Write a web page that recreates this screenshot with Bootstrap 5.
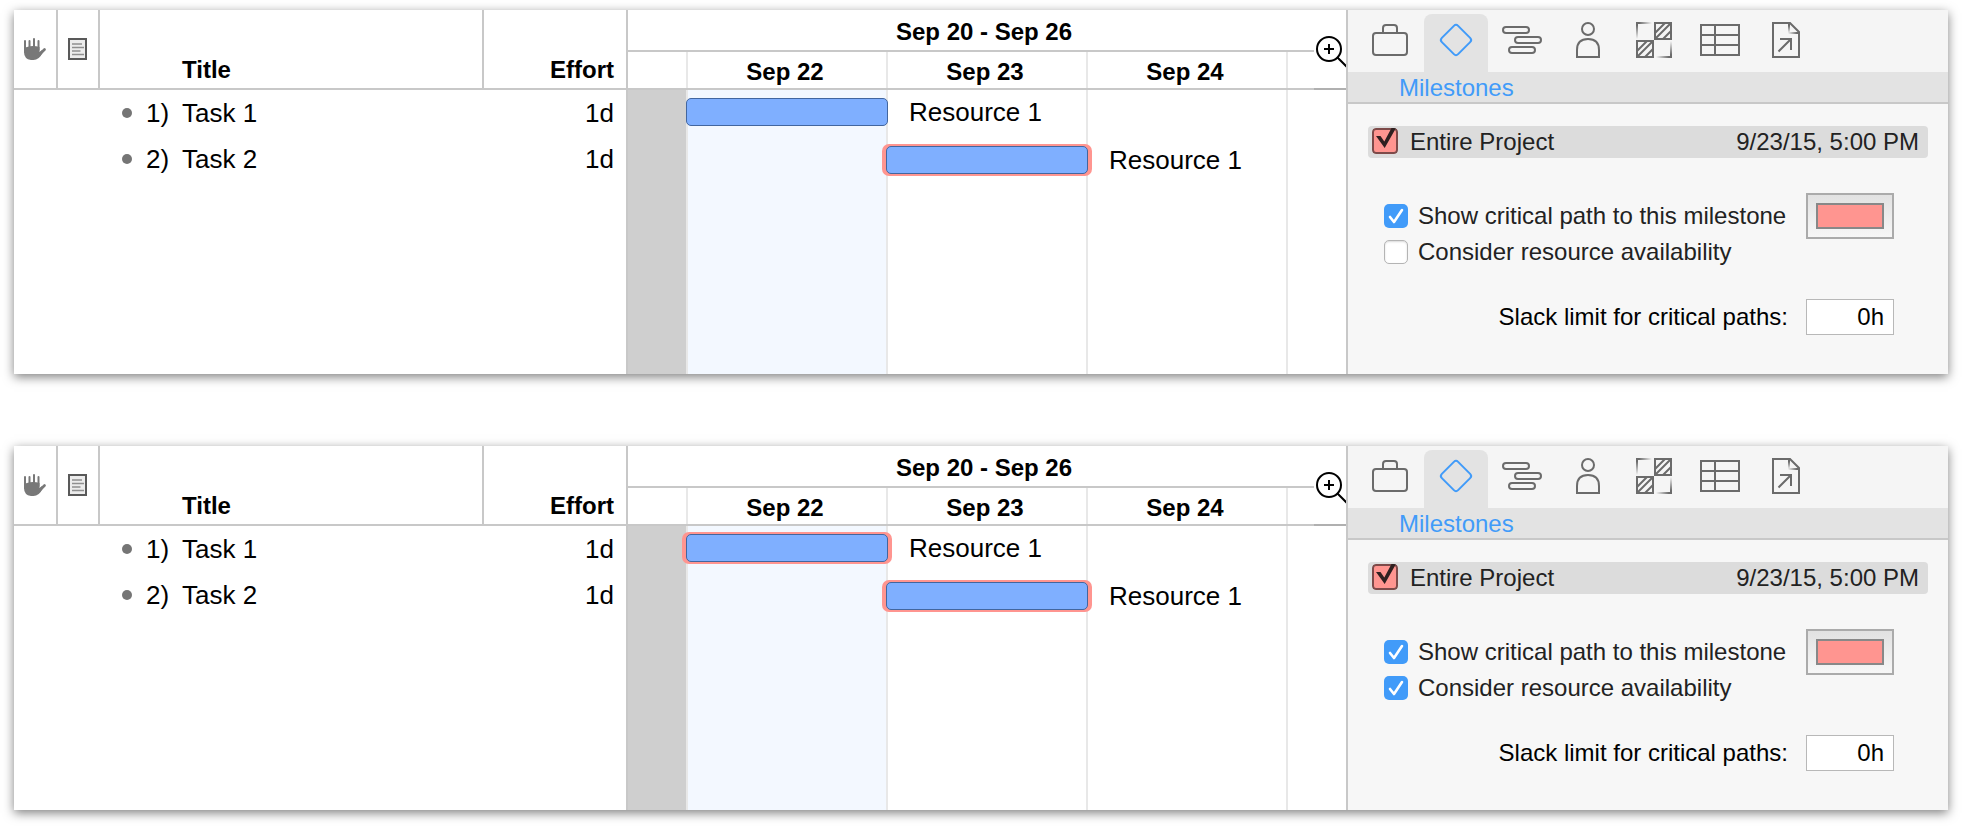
<!DOCTYPE html>
<html lang="en">
<head>
<meta charset="utf-8">
<meta name="viewport" content="width=device-width, initial-scale=1">
<title>Critical path milestones</title>
<link href="https://cdn.jsdelivr.net/npm/bootstrap@5.3.0/dist/css/bootstrap.min.css" rel="stylesheet">
<style>
  :root { --line: #c8c8c8; --faint: #e8e8e8; --ink: #6b6b6b; --accent: #419bf9; --critical: #ff9590; }
  body { font-family: "Liberation Sans", Arial, sans-serif; font-size: 24px; line-height: 24px; color: #000; background: #fff; padding: 10px 14px 16px; }
  .stack { gap: 72px; }
  .window { min-height: 364px; background: #fff; box-shadow: 0 3px 10px rgba(0,0,0,.5); }

  /* outline */
  .outline { width: 614px; border-right: 2px solid var(--line); }
  .outline table { table-layout: fixed; border-collapse: separate; border-spacing: 0; }
  .outline th { height: 80px; padding: 0 12px 6px; vertical-align: bottom; border-right: 2px solid var(--line); border-bottom: 2px solid var(--line); }
  .outline th:last-child { border-right: 0; }
  .outline th.icon-head { padding: 0; vertical-align: middle; text-align: center; }
  .outline th.title-head { padding-left: 82px; }
  .outline td { height: 46px; padding: 0 12px 0 0; font-size: 26px; line-height: 26px; vertical-align: middle; }
  .task { padding-left: 22px; }
  .dot { width: 10px; height: 10px; margin-right: 14px; border-radius: 50%; background: #757575; }
  .num { width: 36px; }

  /* timeline */
  .timeline { min-width: 0; }
  .range-head { height: 42px; padding: 4px 6px 0 0; border-bottom: 2px solid var(--line); }
  .days { display: grid; grid-template-columns: 58fr 200fr 200fr 200fr 60fr; }
  .day-head { height: 38px; border-bottom: 2px solid var(--line); }
  .days > .day { border-left: 2px solid var(--faint); }
  .day-head > .day { padding: 4px 4px 0 0; }
  .weekend { background: #cfcfcf; }
  .today { background: #f3f8ff; }
  .chart { display: grid; }
  .chart > * { grid-area: 1 / 1; }
  .bars { padding-top: 8px; gap: 20px; }
  .bar { height: 28px; margin-right: -2px; border: 1px solid #42669f; border-radius: 5px; background: #7fafff; }
  .bar.critical { box-shadow: -2px 0 0 2px var(--critical), 2px 0 0 2px var(--critical); }
  .who { grid-column-end: -1; padding-left: 23px; font-size: 26px; line-height: 28px; white-space: nowrap; }
  .first .bar { grid-column: 2; } .first .who { grid-column-start: 3; }
  .second .bar { grid-column: 3; } .second .who { grid-column-start: 4; }
  .zoom { width: 32px; height: 80px; background: #fff; border: 0; border-bottom: 2px solid #b0b0b0; padding: 6px 0 0; }

  /* inspector */
  .inspector { width: 602px; border-left: 2px solid var(--line); background: #f7f7f7; color: #222; }
  .tabs { gap: 2px; padding: 4px 10px 0; background: #f5f5f5; }
  .tabs button { width: 64px; height: 58px; padding: 0 0 6px; border: 0; border-radius: 8px 8px 0 0; background: none; color: var(--ink); }
  .tabs button.active { background: #e3e3e3; color: var(--accent); }
  .section-name { height: 32px; padding: 0 51px; line-height: 32px; font-size: 24px; font-weight: 400; color: var(--accent); background: #e3e3e3; border-bottom: 2px solid var(--line); }
  .milestone { height: 32px; margin: 22px 20px 35px; padding: 0 9px 0 4px; border-radius: 4px; background: #dcdcdc; }
  .milestone label { margin-left: 12px; }
  input[type=checkbox] { appearance: none; flex: none; width: 24px; height: 24px; margin: 0; background: #fff center / 100% 100% no-repeat; border: 1px solid #b4b4b4; border-radius: 5px; }
  input[type=checkbox]:not(:checked) { box-shadow: inset 0 1px 2px rgba(0,0,0,.15); }
  input[type=checkbox]:checked { border: 0; background-color: var(--accent); background-image: url("data:image/svg+xml,%3Csvg xmlns='http://www.w3.org/2000/svg' viewBox='0 0 24 24'%3E%3Cpath d='M6 13l4 5 8-12' fill='none' stroke='%23fff' stroke-width='2.6' stroke-linecap='round' stroke-linejoin='round'/%3E%3C/svg%3E"); }
  .milestone input[type=checkbox]:checked { width: 26px; height: 26px; margin-bottom: 2px; border-radius: 4px; background-color: transparent; background-image: url("data:image/svg+xml,%3Csvg xmlns='http://www.w3.org/2000/svg' viewBox='0 0 26 26'%3E%3Crect x='1' y='1' width='24' height='24' rx='3' fill='%23ff9590' stroke='%237d4a49' stroke-width='2'/%3E%3Cpath d='M4 8H8.500L12.300 13.500L19.500 0H24L12.700 20Z' fill='%23302020'/%3E%3C/svg%3E"); }
  .settings { padding: 0 54px 0 36px; }
  .options { gap: 12px; padding-top: 11px; }
  .options > div { gap: 10px; }
  .swatch { width: 88px; height: 46px; padding: 8px; border: 2px solid #ababab; background: linear-gradient(#e2e2e2, #f7f7f7); }
  .swatch span { display: block; height: 26px; border: 2px solid #888; background: var(--critical); }
  .slack { margin-top: 35px; gap: 18px; color: #000; }
  .slack input { width: 88px; height: 36px; padding: 0 9px; border: 1px solid #b8b8b8; border-radius: 0; text-align: right; font: inherit; color: #000; background: #fff; }
  svg { display: block; margin: auto; fill: none; stroke: currentColor; stroke-width: 2; }
</style>
</head>
<body>

<svg width="0" height="0" class="position-absolute" aria-hidden="true">
  <defs>
    <linearGradient id="fadeR"><stop offset=".2" stop-color="#6b6b6b"/><stop offset="1" stop-color="#6b6b6b" stop-opacity="0"/></linearGradient>
    <linearGradient id="fadeL"><stop offset="0" stop-color="#6b6b6b" stop-opacity="0"/><stop offset=".8" stop-color="#6b6b6b"/></linearGradient>
    <linearGradient id="fadeD" x2="0" y2="1"><stop offset=".2" stop-color="#6b6b6b"/><stop offset="1" stop-color="#6b6b6b" stop-opacity="0"/></linearGradient>
    <linearGradient id="fadeU" x2="0" y2="1"><stop offset="0" stop-color="#6b6b6b" stop-opacity="0"/><stop offset=".8" stop-color="#6b6b6b"/></linearGradient>
  </defs>
  <symbol id="hand" viewBox="0 0 22 22"><g stroke="#787878" stroke-linecap="round"><path d="M1 3V14M5.500 3V12M10 1V12M14.500 3V12"/><path stroke-width="2.600" d="M20.500 11.500L15 17"/></g><path fill="#787878" stroke="none" d="M0 10L3 9Q9 7 15.500 9V14L18 12L18.500 15Q15 22 9.500 22H7Q0 21 0 14Z"/></symbol>
  <symbol id="note" viewBox="0 0 20 22"><path fill="#ececec" stroke="#595959" d="M1 1H18V21H1Z"/><path stroke="#8f8f8f" stroke-width="1.500" d="M4 6H14M4 9.500H16M4 13H12.500M4 16.500H16"/></symbol>
  <symbol id="lens" viewBox="0 0 32 36"><circle cx="15" cy="15" r="12"/><path d="M15 10V20M10 15H20M23.500 23.500L33 33"/></symbol>
  <symbol id="case" viewBox="0 0 40 36"><rect x="3" y="11" width="34" height="22" rx="3"/><path d="M13 11V6q0-3 3-3h8q3 0 3 3v5"/></symbol>
  <symbol id="diamond" viewBox="0 0 40 36"><rect x="8.500" y="6.500" width="23" height="23" rx="3" transform="rotate(45 20 18)"/></symbol>
  <symbol id="gantt" viewBox="0 0 40 36"><rect x="1" y="5" width="26" height="6" rx="3"/><rect x="13" y="15" width="26" height="6" rx="3"/><rect x="7" y="25" width="26" height="6" rx="3"/></symbol>
  <symbol id="person" viewBox="0 0 40 36"><circle cx="20" cy="7" r="6"/><path d="M9 35V28C9 21 13 17 20 17S31 21 31 28V35Z"/></symbol>
  <symbol id="styles" viewBox="0 0 40 36"><rect x="21" y="1" width="16" height="16"/><rect x="3" y="19" width="16" height="16"/><path d="M21 11L31 1M22 16L36 2M29 17L37 9M3 29L13 19M4 34L18 20M11 35L19 27"/><g stroke="none"><rect x="2" width="16" height="2" fill="url(#fadeR)"/><rect x="2" width="2" height="17" fill="url(#fadeD)"/><rect x="22" y="34" width="16" height="2" fill="url(#fadeL)"/><rect x="36" y="19" width="2" height="17" fill="url(#fadeU)"/></g></symbol>
  <symbol id="grid" viewBox="0 0 40 36"><path d="M1 3H39V33H1ZM1 13H39M1 23H39M15 3V33"/></symbol>
  <symbol id="file" viewBox="0 0 40 36"><path d="M7 1H24L33 10V35H7Z"/><path stroke="none" fill="url(#fadeD)" d="M22 2H24V11H22Z"/><path stroke="none" fill="url(#fadeL)" d="M22 10H33V12H22Z"/><path d="M12.500 29.500L25 17M14 17H25V28"/></symbol>
</svg>

<main class="stack d-flex flex-column">

  <section class="window d-flex">
    <div class="outline flex-shrink-0">
      <table class="w-100">
        <colgroup><col style="width:44px"><col style="width:42px"><col><col style="width:142px"></colgroup>
        <thead><tr>
          <th class="icon-head" aria-label="Violations"><svg width="22" height="22"><use href="#hand"/></svg></th>
          <th class="icon-head" aria-label="Notes"><svg width="20" height="22"><use href="#note"/></svg></th>
          <th class="title-head">Title</th><th class="text-end">Effort</th>
        </tr></thead>
        <tbody>
          <tr><td></td><td></td><td><div class="task d-flex align-items-center"><span class="dot"></span><span class="num">1)</span>Task 1</div></td><td class="text-end">1d</td></tr>
          <tr><td></td><td></td><td><div class="task d-flex align-items-center"><span class="dot"></span><span class="num">2)</span>Task 2</div></td><td class="text-end">1d</td></tr>
        </tbody>
      </table>
    </div>

    <div class="timeline position-relative flex-grow-1 d-flex flex-column">
      <div class="range-head d-flex align-items-center justify-content-center fw-bold">Sep 20 - Sep 26</div>
      <div class="day-head days fw-bold text-center">
        <div></div>
        <div class="day d-flex align-items-center justify-content-center">Sep 22</div>
        <div class="day d-flex align-items-center justify-content-center">Sep 23</div>
        <div class="day d-flex align-items-center justify-content-center">Sep 24</div>
        <div class="day"></div>
      </div>
      <button type="button" class="zoom position-absolute top-0 end-0" aria-label="Zoom in"><svg width="32" height="36"><use href="#lens"/></svg></button>
      <div class="chart flex-grow-1">
        <div class="days"><div class="weekend"></div><div class="day today"></div><div class="day"></div><div class="day"></div><div class="day"></div></div>
        <div class="bars d-flex flex-column">
          <div class="days first"><div class="bar"></div><div class="who">Resource 1</div></div>
          <div class="days second"><div class="bar critical"></div><div class="who">Resource 1</div></div>
        </div>
      </div>
    </div>

    <aside class="inspector flex-shrink-0">
      <div class="tabs d-flex">
        <button type="button" aria-label="Project"><svg width="40" height="36"><use href="#case"/></svg></button>
        <button type="button" class="active" aria-label="Milestones"><svg width="40" height="36"><use href="#diamond"/></svg></button>
        <button type="button" aria-label="Task"><svg width="40" height="36"><use href="#gantt"/></svg></button>
        <button type="button" aria-label="Resource"><svg width="40" height="36"><use href="#person"/></svg></button>
        <button type="button" aria-label="Styles"><svg width="40" height="36"><use href="#styles"/></svg></button>
        <button type="button" aria-label="Custom data"><svg width="40" height="36"><use href="#grid"/></svg></button>
        <button type="button" aria-label="Attachments"><svg width="40" height="36"><use href="#file"/></svg></button>
      </div>
      <h2 class="section-name m-0">Milestones</h2>
      <div class="milestone d-flex align-items-center">
        <input type="checkbox" id="project-a" checked><label for="project-a">Entire Project</label>
        <span class="ms-auto">9/23/15, 5:00 PM</span>
      </div>
      <div class="settings">
        <div class="d-flex justify-content-between align-items-start">
          <div class="options d-flex flex-column">
            <div class="d-flex"><input type="checkbox" id="path-a" checked><label for="path-a">Show critical path to this milestone</label></div>
            <div class="d-flex"><input type="checkbox" id="avail-a"><label for="avail-a">Consider resource availability</label></div>
          </div>
          <button type="button" class="swatch" aria-label="Critical path color"><span></span></button>
        </div>
        <div class="slack d-flex align-items-center justify-content-end">
          <label for="slack-a">Slack limit for critical paths:</label><input type="text" id="slack-a" value="0h">
        </div>
      </div>
    </aside>
  </section>

  <section class="window d-flex">
    <div class="outline flex-shrink-0">
      <table class="w-100">
        <colgroup><col style="width:44px"><col style="width:42px"><col><col style="width:142px"></colgroup>
        <thead><tr>
          <th class="icon-head" aria-label="Violations"><svg width="22" height="22"><use href="#hand"/></svg></th>
          <th class="icon-head" aria-label="Notes"><svg width="20" height="22"><use href="#note"/></svg></th>
          <th class="title-head">Title</th><th class="text-end">Effort</th>
        </tr></thead>
        <tbody>
          <tr><td></td><td></td><td><div class="task d-flex align-items-center"><span class="dot"></span><span class="num">1)</span>Task 1</div></td><td class="text-end">1d</td></tr>
          <tr><td></td><td></td><td><div class="task d-flex align-items-center"><span class="dot"></span><span class="num">2)</span>Task 2</div></td><td class="text-end">1d</td></tr>
        </tbody>
      </table>
    </div>

    <div class="timeline position-relative flex-grow-1 d-flex flex-column">
      <div class="range-head d-flex align-items-center justify-content-center fw-bold">Sep 20 - Sep 26</div>
      <div class="day-head days fw-bold text-center">
        <div></div>
        <div class="day d-flex align-items-center justify-content-center">Sep 22</div>
        <div class="day d-flex align-items-center justify-content-center">Sep 23</div>
        <div class="day d-flex align-items-center justify-content-center">Sep 24</div>
        <div class="day"></div>
      </div>
      <button type="button" class="zoom position-absolute top-0 end-0" aria-label="Zoom in"><svg width="32" height="36"><use href="#lens"/></svg></button>
      <div class="chart flex-grow-1">
        <div class="days"><div class="weekend"></div><div class="day today"></div><div class="day"></div><div class="day"></div><div class="day"></div></div>
        <div class="bars d-flex flex-column">
          <div class="days first"><div class="bar critical"></div><div class="who">Resource 1</div></div>
          <div class="days second"><div class="bar critical"></div><div class="who">Resource 1</div></div>
        </div>
      </div>
    </div>

    <aside class="inspector flex-shrink-0">
      <div class="tabs d-flex">
        <button type="button" aria-label="Project"><svg width="40" height="36"><use href="#case"/></svg></button>
        <button type="button" class="active" aria-label="Milestones"><svg width="40" height="36"><use href="#diamond"/></svg></button>
        <button type="button" aria-label="Task"><svg width="40" height="36"><use href="#gantt"/></svg></button>
        <button type="button" aria-label="Resource"><svg width="40" height="36"><use href="#person"/></svg></button>
        <button type="button" aria-label="Styles"><svg width="40" height="36"><use href="#styles"/></svg></button>
        <button type="button" aria-label="Custom data"><svg width="40" height="36"><use href="#grid"/></svg></button>
        <button type="button" aria-label="Attachments"><svg width="40" height="36"><use href="#file"/></svg></button>
      </div>
      <h2 class="section-name m-0">Milestones</h2>
      <div class="milestone d-flex align-items-center">
        <input type="checkbox" id="project-b" checked><label for="project-b">Entire Project</label>
        <span class="ms-auto">9/23/15, 5:00 PM</span>
      </div>
      <div class="settings">
        <div class="d-flex justify-content-between align-items-start">
          <div class="options d-flex flex-column">
            <div class="d-flex"><input type="checkbox" id="path-b" checked><label for="path-b">Show critical path to this milestone</label></div>
            <div class="d-flex"><input type="checkbox" id="avail-b" checked><label for="avail-b">Consider resource availability</label></div>
          </div>
          <button type="button" class="swatch" aria-label="Critical path color"><span></span></button>
        </div>
        <div class="slack d-flex align-items-center justify-content-end">
          <label for="slack-b">Slack limit for critical paths:</label><input type="text" id="slack-b" value="0h">
        </div>
      </div>
    </aside>
  </section>

</main>
<script src="https://cdn.jsdelivr.net/npm/bootstrap@5.3.0/dist/js/bootstrap.bundle.min.js"></script>
</body>
</html>
